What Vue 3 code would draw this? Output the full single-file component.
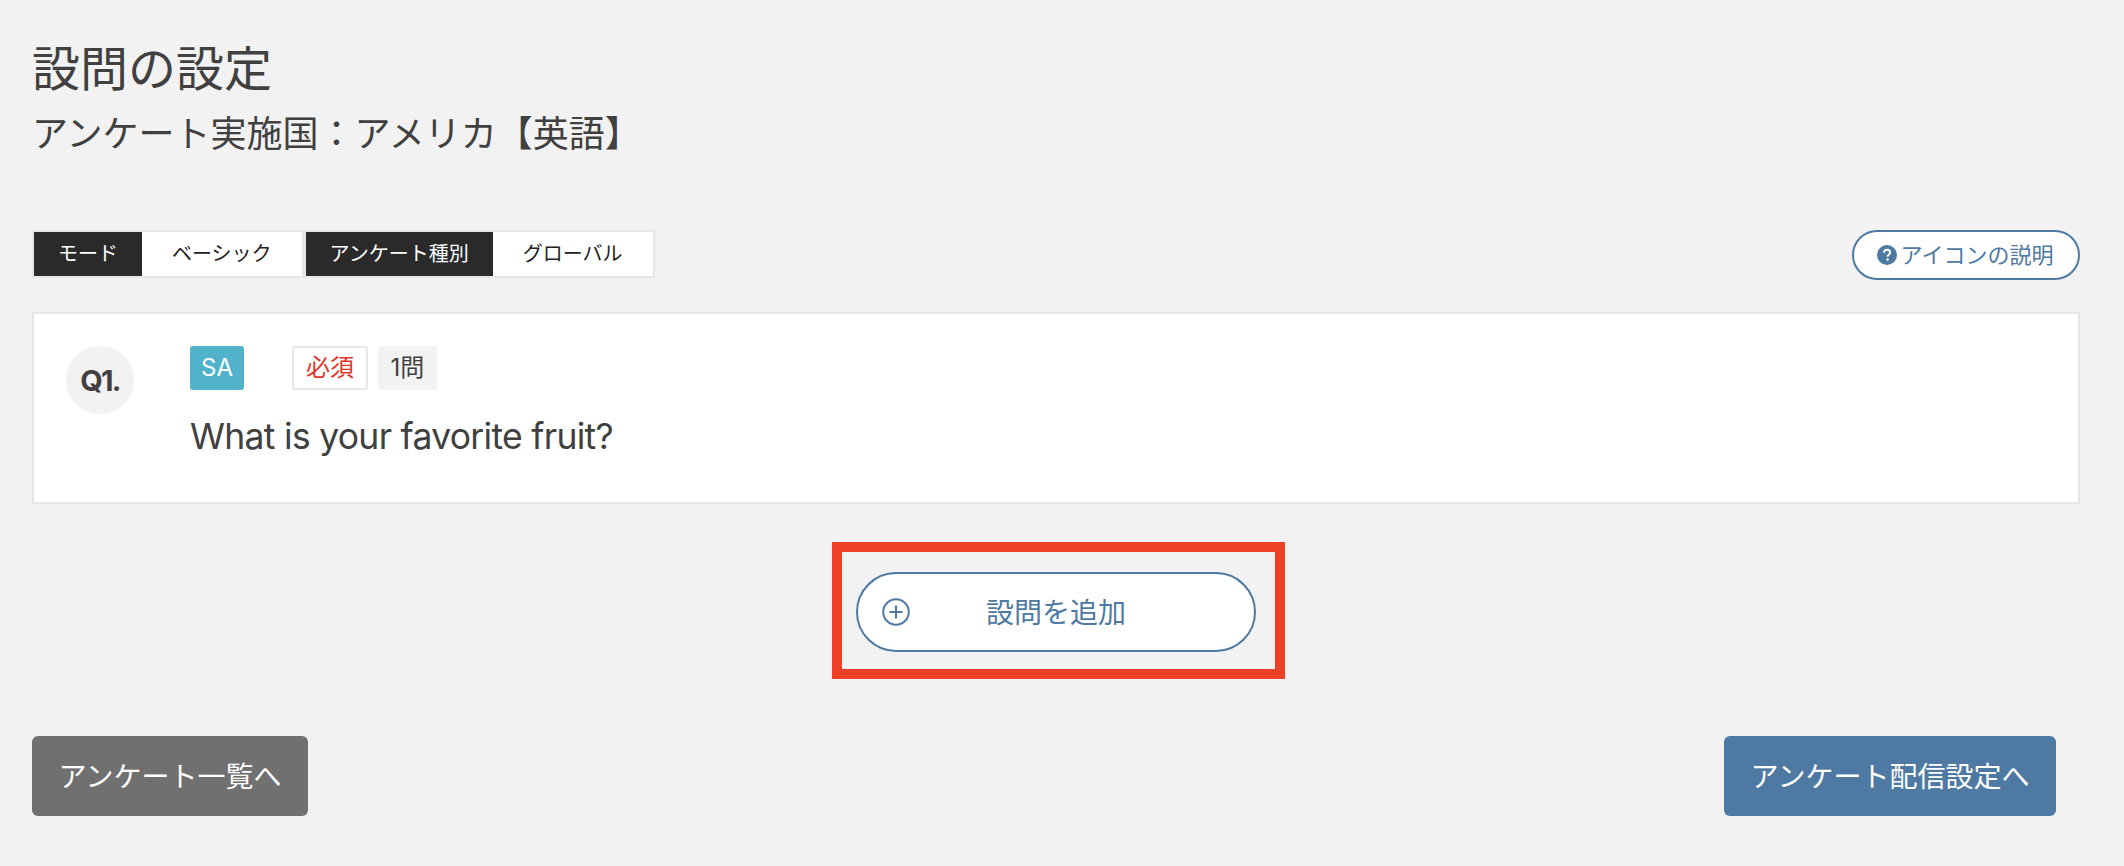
<script setup>
const tags = [
  { label: 'モード', value: 'ベーシック' },
  { label: 'アンケート種別', value: 'グローバル' }
]
</script>

<template>
  <main class="page">
    <h1 class="title">設問の設定</h1>
    <h2 class="subtitle">アンケート実施国：アメリカ【英語】</h2>

    <div class="toolbar">
      <div class="tags">
        <div v-for="t in tags" :key="t.label" class="tag">
          <span class="tag-label">{{ t.label }}</span>
          <span class="tag-value">{{ t.value }}</span>
        </div>
      </div>
      <button class="help" type="button">
        <svg class="help-icon" viewBox="0 0 20 20" aria-hidden="true">
          <circle cx="10" cy="10" r="10" fill="#4d79a3" />
          <path d="M6.9 7.6c.1-1.9 1.4-2.9 3.2-2.9 1.800 0 3.100 1.100 3.100 2.600 0 1.200-.6 1.800-1.500 2.400-.8.5-1.100.9-1.100 1.700v.3" fill="none" stroke="#fff" stroke-width="1.900" />
          <circle cx="10.500" cy="14.500" r="1.250" fill="#fff" />
        </svg>
        <span>アイコンの説明</span>
      </button>
    </div>

    <section class="card">
      <div class="number">Q1.</div>
      <div class="body">
        <div class="badges">
          <span class="badge badge-type">SA</span>
          <span class="badge badge-required">必須</span>
          <span class="badge badge-count">1問</span>
        </div>
        <p class="question">What is your favorite fruit?</p>
      </div>
    </section>

    <div class="add-row">
      <div class="highlight">
        <button class="add" type="button">
          <svg class="add-icon" viewBox="0 0 28 28" aria-hidden="true">
            <circle cx="14" cy="14" r="12.800" fill="none" stroke="#4d79a3" stroke-width="2" />
            <path d="M14 7.500v13M7.500 14h13" fill="none" stroke="#4d79a3" stroke-width="2" />
          </svg>
          <span>設問を追加</span>
        </button>
      </div>
    </div>

    <div class="actions">
      <button class="action action-gray" type="button">アンケート一覧へ</button>
      <button class="action action-blue" type="button">アンケート配信設定へ</button>
    </div>
  </main>
</template>

<style>
html, body {
  margin: 0;
  background: #f2f2f2;
}
</style>

<style scoped>
.page {
  box-sizing: border-box;
  min-height: 866px;
  padding: 35px 44px 0 32px;
  background: #f2f2f2;
  color: #404040;
  font-family: Inter, "Noto Sans CJK JP", sans-serif;
}
.title {
  margin: 0;
  font-size: 48px;
  font-weight: 400;
  line-height: 68px;
}
.subtitle {
  margin: 7px 0 0;
  font-size: 36px;
  font-weight: 400;
  line-height: 48px;
}
.toolbar {
  display: flex;
  justify-content: space-between;
  align-items: flex-start;
  margin-top: 72px;
}
.tags {
  display: flex;
}
.tag {
  display: flex;
  border: 2px solid #e6e6e6;
  font-size: 20px;
  line-height: 44px;
}
.tag-label {
  padding: 0 24px;
  background: #2a2a2a;
  color: #fff;
}
.tag-value {
  padding: 0 30px;
  background: #fff;
  color: #222;
}
.help {
  display: flex;
  align-items: center;
  justify-content: center;
  gap: 4px;
  box-sizing: border-box;
  width: 228px;
  height: 50px;
  padding: 0 2px 5px 0;
  border: 2px solid #4d79a3;
  border-radius: 25px;
  background: #fff;
  color: #4d79a3;
  font: inherit;
  font-size: 22px;
}
.help-icon {
  width: 20px;
  height: 20px;
  flex: none;
  margin-top: 4px;
}
.card {
  display: flex;
  gap: 56px;
  box-sizing: border-box;
  height: 192px;
  margin-top: 32px;
  padding: 32px;
  border: 2px solid #e6e6e6;
  background: #fff;
}
.number {
  display: flex;
  align-items: center;
  justify-content: center;
  width: 68px;
  height: 68px;
  flex: none;
  border-radius: 50%;
  background: #f2f2f2;
  font-size: 29px;
  font-weight: 700;
  letter-spacing: -1.800px;
}
.badges {
  display: flex;
}
.badge {
  box-sizing: border-box;
  height: 44px;
  border-radius: 3px;
  font-size: 24px;
  line-height: 44px;
  text-align: center;
}
.badge-type {
  width: 54px;
  background: #50b3cb;
  color: #fff;
}
.badge-required {
  width: 76px;
  margin-left: 48px;
  border: 2px solid #e6e6e6;
  color: #e0352b;
  line-height: 40px;
}
.badge-count {
  width: 59px;
  margin-left: 10px;
  background: #f2f2f2;
}
.question {
  margin: 23px 0 0;
  font-size: 35.500px;
  letter-spacing: -0.700px;
  line-height: 48px;
}
.add-row {
  display: flex;
  justify-content: center;
  margin-top: 38px;
  padding-left: 5px;
}
.highlight {
  display: flex;
  padding: 20px 19px 17px 14px;
  border: 10px solid #ee4026;
}
.add {
  display: flex;
  position: relative;
  align-items: center;
  justify-content: center;
  box-sizing: border-box;
  width: 400px;
  height: 80px;
  padding: 0 0 2px;
  border: 2px solid #4d79a3;
  border-radius: 40px;
  background: #fff;
  color: #4d79a3;
  font: inherit;
  font-size: 28px;
}
.add-icon {
  position: absolute;
  left: 24px;
  top: 24px;
  width: 28px;
  height: 28px;
}
.actions {
  display: flex;
  justify-content: space-between;
  margin-top: 57px;
  padding-right: 24px;
}
.action {
  box-sizing: border-box;
  height: 80px;
  padding: 0 0 3px;
  border: none;
  border-radius: 6px;
  color: #fff;
  font: inherit;
  font-size: 28px;
}
.action-gray {
  width: 276px;
  background: #707070;
}
.action-blue {
  width: 332px;
  background: #4d79a3;
}
</style>
